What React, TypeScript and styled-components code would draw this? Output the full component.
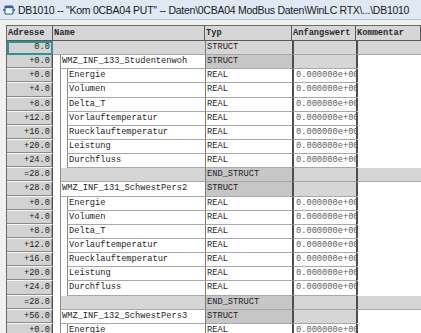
import React from "react";
import styled, { createGlobalStyle, css } from "styled-components";

const Global = createGlobalStyle`
  html, body { margin: 0; padding: 0; background: #f0f0f0; overflow: hidden; }
  #root { width: 421px; height: 333px; overflow: hidden; }
`;

type Kind = "root" | "struct" | "elem" | "end";
interface Row { addr: string; kind: Kind; name?: string; typ: string; init?: string; }

const children = (start: string[]): Row[] => {
  const names = ["Energie", "Volumen", "Delta_T", "Vorlauftemperatur", "Ruecklauftemperatur", "Leistung", "Durchfluss"];
  return names.map((n, i) => ({ addr: start[i], kind: "elem" as Kind, name: n, typ: "REAL", init: "0.000000e+000" }));
};
const offs = ["+0.0", "+4.0", "+8.0", "+12.0", "+16.0", "+20.0", "+24.0"];

const rows: Row[] = [
  { addr: "0.0", kind: "root", typ: "STRUCT" },
  { addr: "+0.0", kind: "struct", name: "WMZ_INF_133_Studentenwoh", typ: "STRUCT" },
  ...children(offs),
  { addr: "=28.0", kind: "end", typ: "END_STRUCT" },
  { addr: "+28.0", kind: "struct", name: "WMZ_INF_131_SchwestPers2", typ: "STRUCT" },
  ...children(offs),
  { addr: "=28.0", kind: "end", typ: "END_STRUCT" },
  { addr: "+56.0", kind: "struct", name: "WMZ_INF_132_SchwestPers3", typ: "STRUCT" },
  ...children(offs).slice(0, 1),
];

const Window = styled.div`
  width: 421px;
  height: 333px;
  display: flex;
  flex-direction: column;
  font-family: "Liberation Mono", "DejaVu Sans Mono", monospace;
`;

const TitleBar = styled.div`
  height: 20px;
  flex: none;
  display: flex;
  align-items: center;
  gap: 3px;
  padding-left: 3px;
  background: #dfe8f3;
  border-bottom: 1px solid #b9c3cf;
  box-sizing: border-box;
  font-family: "Liberation Sans", "Noto Sans", sans-serif;
  font-size: 10.5px;
  color: #1a1a1a;
  white-space: nowrap;
  overflow: hidden;
`;

const TitleText = styled.span`
  letter-spacing: -0.27px;
`;

const IconBox = styled.svg`
  flex: none;
`;

const Frame = styled.div`
  flex: 1;
  padding: 5px 0 0 6px;
  background: #f0f0f0;
  overflow: hidden;
`;

const Table = styled.div`
  border-left: 1px solid #6a6a6a;
  border-top: 1px solid #6a6a6a;
  background: #ffffff;
  height: 100%;
`;

const cols = css`
  display: grid;
  grid-template-columns: 46px 152px 87px 64px 1fr;
`;

const HeaderRow = styled.div`
  ${cols};
  height: 14px;
  background: #d6d6d6;
  border-bottom: 1px solid #5a5a5a;
`;

const HeadCell = styled.div`
  border-right: 1px solid #5a5a5a;
  padding-left: 1px;
  font-size: 8.7px;
  font-weight: bold;
  line-height: 14px;
  color: #2a2a2a;
  white-space: nowrap;
  overflow: hidden;
`;

const DataRow = styled.div`
  ${cols};
  height: 14.15px;
  font-size: 8.7px;
  line-height: 13px;
  color: #1e1e1e;
`;

const AddrCell = styled.div<{ $sel?: boolean }>`
  box-sizing: border-box;
  background: #d2d2d2;
  text-align: right;
  padding-right: 2px;
  border-right: 1px solid #505050;
  border-bottom: 1px solid #f6f6f6;
  box-shadow: inset 0 -1px 0 #8a8a8a, inset -1px 0 0 #9a9a9a;
  ${(p) =>
    p.$sel &&
    css`
      outline: 2px solid #2f9393;
      outline-offset: -2px;
    `}
`;

const NameCell = styled.div<{ $indent: number; $gray?: boolean }>`
  display: flex;
  padding-left: ${(p) => p.$indent}px;
  background: ${(p) => (p.$gray ? "#d6d6d6" : "#ffffff")};
  min-width: 0;
`;

const Guide = styled.div`
  flex: 1;
  display: flex;
  border-left: 1px solid #8c8c8c;
  padding-left: 6px;
  min-width: 0;
`;

const NameBox = styled.div<{ $gray?: boolean; $edge?: boolean }>`
  flex: 1;
  box-sizing: border-box;
  background: ${(p) => (p.$gray ? "#d6d6d6" : "#ffffff")};
  border-left: ${(p) => (p.$edge ? "1px solid #8c8c8c" : "none")};
  border-bottom: 1px solid #a8a8a8;
  padding-left: 1px;
  white-space: nowrap;
  overflow: hidden;
`;

const TypCell = styled.div<{ $bg: string }>`
  box-sizing: border-box;
  background: ${(p) => p.$bg};
  border-left: 1px solid #7a7a7a;
  border-bottom: 1px solid #a8a8a8;
  padding-left: 1px;
  white-space: nowrap;
  overflow: hidden;
`;

const InitCell = styled.div<{ $bg: string }>`
  box-sizing: border-box;
  background: ${(p) => p.$bg};
  border-left: 2px solid #4e4e4e;
  border-bottom: 1px solid #a8a8a8;
  padding-left: 2px;
  color: #5c5c5c;
  white-space: nowrap;
  overflow: hidden;
`;

const CommentCell = styled.div<{ $bg: string }>`
  box-sizing: border-box;
  background: ${(p) => p.$bg};
  border-left: 2px solid #4e4e4e;
  border-bottom: 1px solid ${(p) => (p.$bg === "#ffffff" ? "#ffffff" : "#a8a8a8")};
`;

const Icon = () => (
  <IconBox width="12" height="10" viewBox="0 0 12 10">
    <rect x="0" y="4" width="1.5" height="2" fill="#3a6cc8" />
    <rect x="10.5" y="4" width="1.5" height="2" fill="#3a6cc8" />
    <rect x="2" y="1" width="8" height="8" rx="1" fill="#ffffff" stroke="#2e5db8" strokeWidth="1.2" />
    <rect x="2" y="1" width="8" height="2.2" fill="#2e5db8" />
  </IconBox>
);

const GRAY = "#d6d6d6";
const DARK = "#c6c6c6";
const WHITE = "#ffffff";

const DataLine: React.FC<{ r: Row; sel?: boolean }> = ({ r, sel }) => {
  let name: React.ReactNode;
  if (r.kind === "root") {
    name = (
      <NameCell $indent={0} $gray>
        <NameBox $gray />
      </NameCell>
    );
  } else if (r.kind === "elem") {
    name = (
      <NameCell $indent={7}>
        <Guide>
          <NameBox $edge>{r.name}</NameBox>
        </Guide>
      </NameCell>
    );
  } else {
    name = (
      <NameCell $indent={7}>
        <NameBox $edge $gray={r.kind === "end"}>{r.name}</NameBox>
      </NameCell>
    );
  }
  const typBg = r.kind === "root" ? GRAY : r.kind === "elem" ? WHITE : DARK;
  const initBg = r.kind === "elem" ? WHITE : GRAY;
  const comBg = r.kind === "root" || r.kind === "end" ? GRAY : WHITE;
  return (
    <DataRow>
      <AddrCell $sel={sel}>{r.addr}</AddrCell>
      {name}
      <TypCell $bg={typBg}>{r.typ}</TypCell>
      <InitCell $bg={initBg}>{r.init}</InitCell>
      <CommentCell $bg={comBg} />
    </DataRow>
  );
};

export default function App() {
  return (
    <Window>
      <Global />
      <TitleBar>
        <Icon />
        <TitleText>DB1010 -- "Kom 0CBA04 PUT" -- Daten\0CBA04 ModBus Daten\WinLC RTX\...\DB1010</TitleText>
      </TitleBar>
      <Frame>
        <Table>
          <HeaderRow>
            <HeadCell>Adresse</HeadCell>
            <HeadCell>Name</HeadCell>
            <HeadCell>Typ</HeadCell>
            <HeadCell>Anfangswert</HeadCell>
            <HeadCell>Kommentar</HeadCell>
          </HeaderRow>
          {rows.map((r, i) => (
            <DataLine key={i} r={r} sel={i === 0} />
          ))}
        </Table>
      </Frame>
    </Window>
  );
}
